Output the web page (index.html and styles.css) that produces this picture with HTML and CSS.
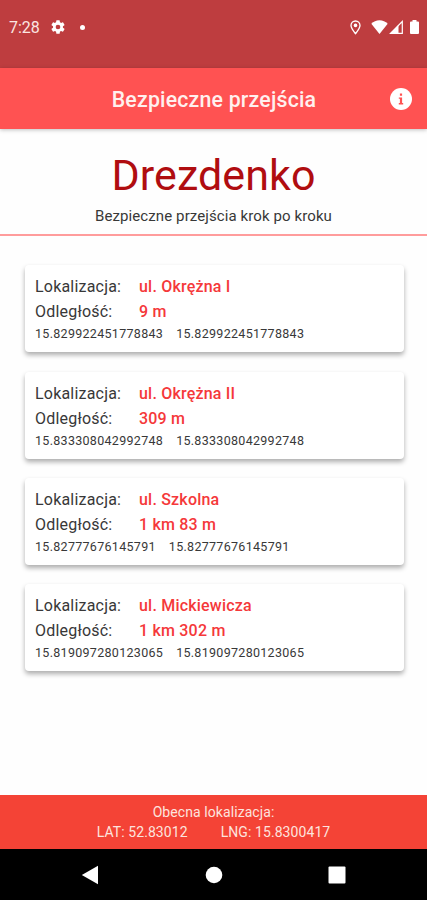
FILE: index.html
```html
<!DOCTYPE html>
<html lang="pl">
<head>
    <meta charset="UTF-8">
    <meta name="viewport" content="width=device-width, initial-scale=1.0">
    <title>Bezpieczne przejścia</title>
    <link rel="stylesheet" href="styles.css">
</head>
<body>
    <!-- Pasek stanu -->
    <div class="status-bar">
        <span class="time">7:28</span>
        <svg class="gear" width="16" height="16" viewBox="0 0 24 24" fill="currentColor">
            <path fill-rule="evenodd" d="M19.4 13a7.5 7.5 0 0 0 0-2l2.2-1.7a.5.5 0 0 0 .1-.6l-2-3.5a.5.5 0 0 0-.6-.2l-2.5 1a7.3 7.3 0 0 0-1.7-1l-.4-2.6a.5.5 0 0 0-.5-.4h-4a.5.5 0 0 0-.5.4L9.1 5a7.3 7.3 0 0 0-1.7 1l-2.5-1a.5.5 0 0 0-.6.2l-2 3.5a.5.5 0 0 0 .1.6L4.6 11a7.5 7.5 0 0 0 0 2l-2.2 1.7a.5.5 0 0 0-.1.6l2 3.5c.1.2.4.3.6.2l2.5-1c.5.4 1.1.7 1.7 1l.4 2.6c0 .2.2.4.5.4h4c.3 0 .5-.2.5-.4l.4-2.6a7.3 7.3 0 0 0 1.7-1l2.5 1c.2.1.5 0 .6-.2l2-3.5a.5.5 0 0 0-.1-.6zM12 15.5a3.5 3.5 0 1 1 0-7 3.5 3.5 0 0 1 0 7z"/>
        </svg>
        <span class="dot"></span>
        <div class="status-icons">
            <svg class="pin" width="11" height="15" viewBox="0 0 11 15" fill="none" stroke="currentColor">
                <path stroke-width="1.3" d="M5.5 13.7C3 10.5 1 8 1 5.5a4.5 4.5 0 0 1 9 0C10 8 8 10.5 5.5 13.7z"/>
                <circle cx="5.5" cy="5.4" r="1.8" fill="currentColor" stroke="none"/>
            </svg>
            <svg class="wifi" width="17" height="14" viewBox="0 0 17 14" fill="currentColor">
                <path d="M8.5 14L.3 3.7C2.5 1.5 5.3.3 8.5.3s6 1.2 8.2 3.4z"/>
            </svg>
            <svg class="signal" width="14" height="14" viewBox="0 0 14 14">
                <path fill="none" stroke="currentColor" stroke-width="1.2" d="M1.5 13.3L13.3 1.5v11.8z"/>
                <path fill="currentColor" d="M1 13.6l8.5-8.5v8.5z"/>
            </svg>
            <svg class="battery" width="9" height="14" viewBox="0 0 9 14" fill="currentColor">
                <path d="M2.5 0h4v1.5H8a1 1 0 0 1 1 1V13a1 1 0 0 1-1 1H1a1 1 0 0 1-1-1V2.5a1 1 0 0 1 1-1h1.5z"/>
            </svg>
        </div>
    </div>

    <!-- Nagłówek -->
    <header class="app-bar">
        <div class="app-title">Bezpieczne przejścia</div>
        <svg class="info" width="22" height="22" viewBox="0 0 22 22">
            <circle cx="11" cy="11" r="11" fill="#fff"/>
            <path fill="#ff5252" d="M9.9 5.5h2.2v2.2H9.9zM8.8 9.4h3.3v5.7h1.1v1.4H8.800v-1.4h1.1v-4.300H8.8z"/>
        </svg>
    </header>

    <div class="intro">
        <h1>Drezdenko</h1>
        <p>Bezpieczne przejścia krok po kroku</p>
    </div>

    <!-- Lista przejść -->
    <ul class="list">
        <li class="card">
            <div class="row"><span class="label">Lokalizacja:</span><span class="value">ul. Okrężna I</span></div>
            <div class="row"><span class="label">Odległość:</span><span class="value">9 m</span></div>
            <div class="coords"><span>15.829922451778843</span><span>15.829922451778843</span></div>
        </li>
        <li class="card">
            <div class="row"><span class="label">Lokalizacja:</span><span class="value">ul. Okrężna II</span></div>
            <div class="row"><span class="label">Odległość:</span><span class="value">309 m</span></div>
            <div class="coords"><span>15.833308042992748</span><span>15.833308042992748</span></div>
        </li>
        <li class="card">
            <div class="row"><span class="label">Lokalizacja:</span><span class="value">ul. Szkolna</span></div>
            <div class="row"><span class="label">Odległość:</span><span class="value">1 km 83 m</span></div>
            <div class="coords"><span>15.82777676145791</span><span>15.82777676145791</span></div>
        </li>
        <li class="card">
            <div class="row"><span class="label">Lokalizacja:</span><span class="value">ul. Mickiewicza</span></div>
            <div class="row"><span class="label">Odległość:</span><span class="value">1 km 302 m</span></div>
            <div class="coords"><span>15.819097280123065</span><span>15.819097280123065</span></div>
        </li>
    </ul>

    <!-- Obecna lokalizacja -->
    <footer class="location">
        <div>Obecna lokalizacja:</div>
        <div class="position"><span>LAT: 52.83012</span><span>LNG: 15.8300417</span></div>
    </footer>

    <!-- Przyciski systemowe -->
    <nav class="nav-bar">
        <svg width="18" height="20" viewBox="0 0 18 20" fill="#fff"><path d="M17 .8v18.4L.8 10z"/></svg>
        <svg width="18" height="18" viewBox="0 0 18 18" fill="#fff"><circle cx="9" cy="9" r="8.3"/></svg>
        <svg width="18" height="18" viewBox="0 0 18 18" fill="#fff"><rect x=".5" y=".5" width="17" height="17" rx="1"/></svg>
    </nav>
</body>
</html>
```
FILE: styles.css
```css
* {
    box-sizing: border-box;
}
body {
    display: flex;
    flex-direction: column;
    height: 900px;
    margin: 0;
    font-family: Roboto, "Liberation Sans", sans-serif;
    background-color: #fefefe;
    color: #383838;
}
.status-bar {
    display: flex;
    align-items: center;
    height: 68px;
    padding: 0 8px 14px 9px;
    background-color: #be3d3f;
    color: #fff;
}
.time {
    width: 41px;
    font-size: 16px;
    color: #fbe6e2;
}
.dot {
    width: 5px;
    height: 5px;
    margin-left: 14px;
    border-radius: 50%;
    background-color: #fff;
}
.status-icons {
    display: flex;
    align-items: center;
    margin-left: auto;
}
.pin {
    margin-right: 10px;
}
.signal {
    margin: 0 7px 0 1px;
}
.app-bar {
    display: grid;
    grid-template-columns: 1fr auto 1fr;
    align-items: center;
    height: 61px;
    padding: 0 15px 0 16px;
    background-color: #ff5252;
    box-shadow: 0 1px 4px rgba(0, 0, 0, 0.25);
}
.app-title {
    grid-column: 2;
    padding-top: 1px;
    font-size: 21.3px;
    font-weight: 500;
    letter-spacing: 0.2px;
    color: #fff0ee;
}
.info {
    justify-self: end;
}
.intro {
    height: 107px;
    padding-top: 20px;
    border-bottom: 2px solid #ff9c9c;
    text-align: center;
}
h1 {
    margin: 0;
    font-size: 43px;
    font-weight: 400;
    line-height: 52px;
    letter-spacing: 0.1px;
    color: #b00d10;
}
p {
    margin: 5px 0 0;
    font-size: 15px;
    line-height: 20px;
    letter-spacing: 0.1px;
}
.list {
    flex: 1;
    display: flex;
    flex-direction: column;
    gap: 19.4px;
    margin: 0;
    padding: 29.15px 23px 0 25px;
    list-style-type: none;
}
.card {
    height: 87px;
    padding: 9px 10px;
    border-radius: 4px;
    background-color: #fff;
    box-shadow: 0 3px 5px rgba(0, 0, 0, 0.32);
}
.row {
    display: flex;
    font-size: 16px;
    line-height: 25px;
    letter-spacing: 0.2px;
}
.label {
    width: 104px;
}
.value {
    font-weight: 500;
    color: #f5383a;
}
.coords {
    display: flex;
    gap: 13px;
    font-size: 12.5px;
    line-height: 20px;
    letter-spacing: 0.3px;
}
.location {
    height: 54px;
    padding-top: 7px;
    background-color: #f44336;
    font-size: 14px;
    line-height: 20px;
    letter-spacing: 0.08px;
    text-align: center;
    color: #fde3df;
}
.position {
    display: flex;
    justify-content: center;
    gap: 33px;
}
.nav-bar {
    display: flex;
    justify-content: space-between;
    align-items: center;
    height: 51px;
    padding: 0 81px;
    background-color: #000;
}
```
